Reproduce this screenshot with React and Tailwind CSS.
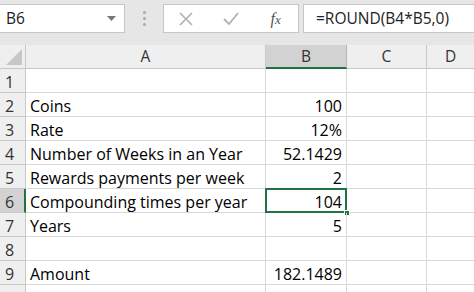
import React from "react";

const rows = [
  ["", ""],
  ["Coins", "100"],
  ["Rate", "12%"],
  ["Number of Weeks in an Year", "52.1429"],
  ["Rewards payments per week", "2"],
  ["Compounding times per year", "104"],
  ["Years", "5"],
  ["", ""],
  ["Amount", "182.1489"],
  ["", ""],
];

export default function App() {
  return (
    <div className="w-[474px] h-[292px] overflow-hidden bg-white text-[#222]" style={{ fontFamily: '"Open Sans", "Noto Sans", sans-serif' }}>
      {/* formula bar */}
      <div className="h-[45px] bg-[#e6e6e6] flex items-start pt-[4px]">
        <div className="w-[125px] h-[29px] bg-white border border-[#c6c6c6] border-l-0 flex items-center justify-between pl-[6px] pr-[8px]">
          <span className="text-[15.5px]">B6</span>
          <svg width="9" height="5" viewBox="0 0 9 5"><path d="M0 0h9L4.5 5z" fill="#777" /></svg>
        </div>
        <div className="w-[38px] h-[29px] flex flex-col items-center justify-center gap-[3px]">
          <div className="w-[3px] h-[3px] rounded-full bg-[#aaa]" />
          <div className="w-[3px] h-[3px] rounded-full bg-[#aaa]" />
          <div className="w-[3px] h-[3px] rounded-full bg-[#aaa]" />
        </div>
        <div className="w-[136px] h-[29px] bg-white border border-[#c6c6c6] flex items-center">
          <div className="w-[45px] flex justify-center">
            <svg width="14" height="14" viewBox="0 0 14 14"><path d="M1 1L13 13M13 1L1 13" stroke="#b0b0b0" strokeWidth="1.6" /></svg>
          </div>
          <div className="w-[45px] flex justify-center">
            <svg width="16" height="14" viewBox="0 0 16 14"><path d="M1 7L6 12L15 1" stroke="#b0b0b0" strokeWidth="1.8" fill="none" /></svg>
          </div>
          <div className="w-[45px] flex justify-center">
            <span className="text-[16px] italic text-[#555]" style={{ fontFamily: '"Liberation Serif", serif' }}>f<span className="text-[13px]">x</span></span>
          </div>
        </div>
        <div className="w-[4px]" />
        <div className="flex-1 h-[29px] bg-white border border-[#c6c6c6] border-r-0 flex items-center pl-[12px]">
          <span className="text-[15.5px]">=ROUND(B4*B5,0)</span>
        </div>
      </div>
      {/* column headers */}
      <div className="flex h-[24px] bg-[#efefef] text-[15.5px] text-[#333]">
        <div className="w-[26px] h-full border-r border-b border-[#c8c8c8] relative">
          <svg className="absolute right-[3px] bottom-[3px]" width="16" height="16" viewBox="0 0 16 16"><path d="M16 0V16H0z" fill="#c7c7c7" /></svg>
        </div>
        <div className="w-[240px] h-full border-r border-b border-[#c8c8c8] flex items-center justify-center pt-[1px]">A</div>
        <div className="w-[81px] h-full bg-[#d2d2d2] border-r border-[#b8b8b8] border-b-2 border-b-[#217346] flex items-center justify-center pt-[1px]">B</div>
        <div className="w-[80px] h-full border-r border-b border-[#c8c8c8] flex items-center justify-center pt-[1px]">C</div>
        <div className="flex-1 h-full border-b border-[#c8c8c8] flex items-center justify-center pt-[1px]">D</div>
      </div>
      {rows.map((r, i) => {
        const sel = i === 5;
        return (
          <div key={i} className="flex h-[24px] text-[16px]">
            <div className={`w-[26px] h-full flex items-center pl-[5px] pt-[2px] text-[#333] border-b border-[#c8c8c8] ${sel ? "bg-[#d2d2d2] border-r-2 border-r-[#217346]" : "bg-[#efefef] border-r border-r-[#c8c8c8]"}`}>{i + 1}</div>
            <div className="w-[240px] h-full border-r border-b border-[#d8d8d8] flex items-center pl-[4px] pt-[2px] text-black whitespace-nowrap">{r[0]}</div>
            <div className="w-[81px] h-full border-r border-b border-[#d8d8d8] flex items-center justify-end pr-[4px] pt-[2px] text-black relative">
              {r[1]}
              {sel && (
                <>
                  <div className="absolute left-[-1px] top-[-1px] right-[-1px] bottom-[-1px] border-2 border-[#217346]" />
                  <div className="absolute right-[-4px] bottom-[-4px] w-[6px] h-[6px] bg-[#217346] border border-white" />
                </>
              )}
            </div>
            <div className="w-[80px] h-full border-r border-b border-[#d8d8d8]" />
            <div className="flex-1 h-full border-b border-[#d8d8d8]" />
          </div>
        );
      })}
    </div>
  );
}
